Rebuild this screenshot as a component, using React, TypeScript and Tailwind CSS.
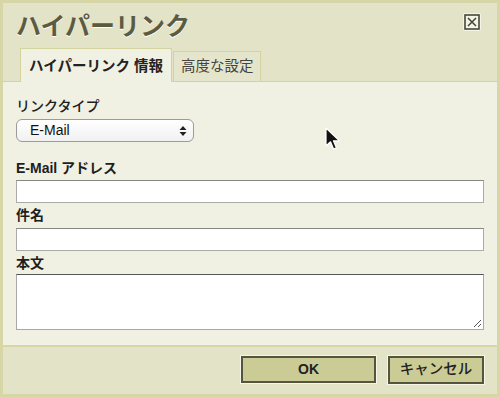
import React from "react"

const jp = "font-['Liberation_Sans','Noto_Sans_CJK_JP',sans-serif]"

const Label = ({ text, bold }: { text: string; bold?: boolean }): JSX.Element => (
  <div className={`text-[14px] leading-[17px] text-[#1e1e1e] ${bold ? "font-bold" : "font-medium"}`}>
    {text}
  </div>
)

const TextInput = (): JSX.Element => (
  <div className="h-[23px] w-[468px] border border-[#ababab] border-t-[#868686] bg-white" />
)

const CloseIcon = (): JSX.Element => (
  <div className="flex h-[18px] w-[18px] items-center justify-center rounded-[2px] bg-[#f4f4e6]">
    <svg width="16" height="16" viewBox="0 0 16 16">
      <rect x="1" y="1" width="14" height="14" fill="none" stroke="#46463a" strokeWidth="1.6" />
      <path d="M4 4 L12 12 M12 4 L4 12" stroke="#46463a" strokeWidth="1.6" />
    </svg>
  </div>
)

const Cursor = (): JSX.Element => (
  <svg className="absolute left-[321px] top-[124px]" width="18" height="26" viewBox="0 0 18 26">
    <path
      d="M2 1 L2 19 L6.5 14.8 L9.6 22 L12.4 20.8 L9.4 13.8 L15.4 13.8 Z"
      fill="#111"
      stroke="#fff"
      strokeWidth="1.2"
      strokeLinejoin="round"
    />
  </svg>
)

const App = (): JSX.Element => {
  return (
    <div className={`relative flex h-[397px] w-[500px] flex-col border-[3px] border-[#d6d6a6] bg-[#e3e3c7] ${jp}`}>
      <div className="flex items-start justify-between pl-[13px] pr-[16px] pt-[7px]">
        <h1 className="text-[25px] font-bold leading-[32px] text-[#5b5b42] [text-shadow:0_1px_0_#fff]">
          ハイパーリンク
        </h1>
        <div className="mt-[3px]">
          <CloseIcon />
        </div>
      </div>
      <div className="mt-[6px] flex items-end border-b border-[#d3d3a0] pl-[17px]">
        <div className="-mb-px flex h-[34px] items-center border border-b-0 border-[#d3d3a0] bg-[#f0f0e3] px-[8px] pt-[2px] text-[14.5px] font-bold text-[#222]">
          ハイパーリンク 情報
        </div>
        <div className="ml-[1px] flex h-[30px] items-center border border-b-0 border-[#d3d3a0] bg-[#e5e5cb] px-[7px] text-[14.5px] text-[#444]">
          高度な設定
        </div>
      </div>
      <div className="flex h-[263px] flex-col bg-[#f0f0e3] px-[13px] pt-[16px]">
        <Label text="リンクタイプ" />
        <div className="mt-[4px] flex h-[23px] w-[178px] items-center justify-between rounded-[6px] border border-[#9b9b9b] bg-gradient-to-b from-white to-[#f1f1f1] pl-[13px] pr-[6px] text-[14px] text-[#111]">
          <span>E-Mail</span>
          <svg width="8" height="12" viewBox="0 0 8 12">
            <path d="M4 1 L7.5 5 L0.5 5 Z M4 11 L7.5 7 L0.5 7 Z" fill="#222" />
          </svg>
        </div>
        <div className="mt-[18px]">
          <Label text="E-Mail アドレス" bold />
        </div>
        <div className="mt-[3px]">
          <TextInput />
        </div>
        <div className="mt-[4px]">
          <Label text="件名" bold />
        </div>
        <div className="mt-[4px]">
          <TextInput />
        </div>
        <div className="mt-[4px]">
          <Label text="本文" bold />
        </div>
        <div className="relative mt-[2px] h-[56px] w-[468px] border border-[#a8a8a8] border-t-[#555] bg-white">
          <svg className="absolute bottom-[1px] right-[1px]" width="10" height="10" viewBox="0 0 10 10">
            <path d="M9 2 L2 9 M9 6 L6 9" stroke="#555" strokeWidth="1" />
          </svg>
        </div>
      </div>
      <div className="flex flex-1 items-start justify-end gap-[12px] border-t-2 border-[#d6d6a6] pr-[13px] pt-[9px]">
        <button className="h-[27px] w-[135px] border-2 border-[#55553f] bg-[#cbcb95] text-[14px] font-bold text-[#222] shadow-[0_0_0_1px_#f6f6e6]">
          OK
        </button>
        <button className="h-[28px] w-[96px] border-2 border-[#55553f] bg-[#cbcb95] text-[14.5px] font-medium text-[#222] shadow-[0_0_0_1px_#f6f6e6]">
          キャンセル
        </button>
      </div>
      <Cursor />
    </div>
  )
}

export default App
